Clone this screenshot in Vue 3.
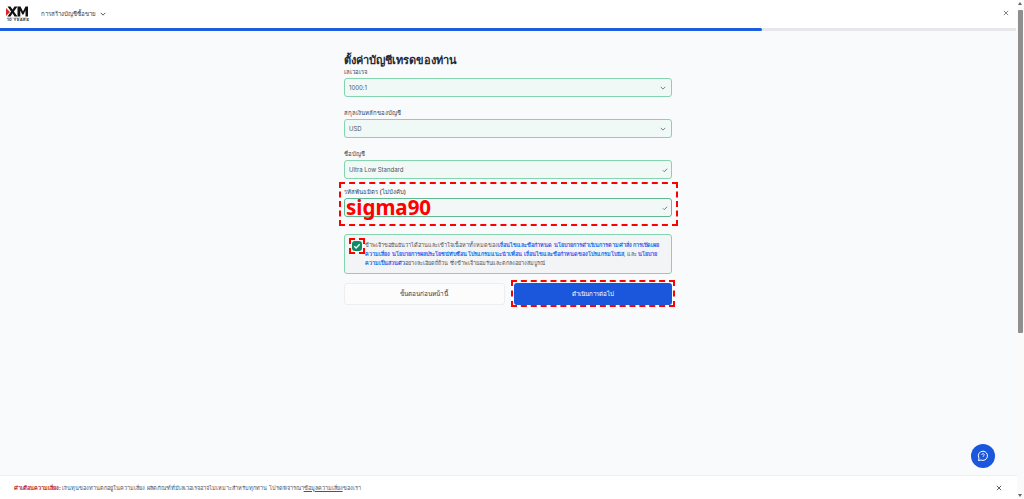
<script setup>
const rows = [
  { label: 'เลเวอเรจ', value: '1000:1', icon: 'down' },
  { label: 'สกุลเงินหลักของบัญชี', value: 'USD', icon: 'down' },
  { label: 'ชื่อบัญชี', value: 'Ultra Low Standard', icon: 'check' },
]
</script>

<template>
  <div class="page">
    <div class="main">
      <header class="top">
        <svg class="logo" width="22" height="20" viewBox="0 0 22 20">
          <path d="M0 3 L4 7 L0 11 Z" fill="#d8232a" />
          <path d="M1.5 1.5h3l2 3 2-3h3l-3.6 5 3.6 5h-3l-2-3.2-2 3.2h-3l3.6-5z" fill="#111" />
          <path d="M11.5 11.5v-10h3l2.5 5 2.5-5h2.5v10h-2.5v-6l-2 4h-1.2l-2-4v6z" fill="#111" />
          <rect x="1" y="12.6" width="20" height="0.6" fill="#aaa" />
        </svg>
        <span class="years">10 YEARS</span>
        <span class="crumb">การสร้างบัญชีซื้อขาย</span>
        <svg class="chev" width="6" height="6" viewBox="0 0 8 8"><path d="M1 2.5l3 3 3-3" fill="none" stroke="#374151" stroke-width="1.2" /></svg>
        <svg class="close" width="6" height="6" viewBox="0 0 7 7"><path d="M1 1l5 5M6 1L1 6" stroke="#6b7280" stroke-width="1" /></svg>
      </header>
      <div class="track"><div class="fill"></div></div>

      <main class="content">
        <form class="form" @submit.prevent>
          <h1>ตั้งค่าบัญชีเทรดของท่าน</h1>
          <div v-for="row in rows" :key="row.label" class="field">
            <label>{{ row.label }}</label>
            <div class="box">
              <span>{{ row.value }}</span>
              <svg v-if="row.icon === 'down'" width="6" height="6" viewBox="0 0 8 8"><path d="M1 2.5l3 3 3-3" fill="none" stroke="#6b7280" stroke-width="1.2" /></svg>
              <svg v-else class="ok" width="6" height="6" viewBox="0 0 8 8"><path d="M1.2 4.4l1.9 1.9 3.7-4" fill="none" stroke="#4b7a68" stroke-width="1.2" /></svg>
            </div>
          </div>

          <div class="field promo">
            <label>รหัสพันธมิตร (ไม่บังคับ)</label>
            <div class="box dark">
              <span></span>
              <svg class="ok" width="6" height="6" viewBox="0 0 8 8"><path d="M1.2 4.4l1.9 1.9 3.7-4" fill="none" stroke="#6b7280" stroke-width="1.2" /></svg>
            </div>
            <span class="sigma">sigma90</span>
            <i class="dash promo-dash"></i>
          </div>

          <div class="agree">
            <span class="tick">
              <svg width="8" height="8" viewBox="0 0 8 8"><path d="M1.3 4.2l1.8 1.7 3.6-3.6" fill="none" stroke="#fff" stroke-width="1.4" /></svg>
              <i class="dash tick-dash"></i>
            </span>
            <p>ข้าพเจ้าขอยืนยันว่าได้อ่านและเข้าใจเนื้อหาทั้งหมดของ<a>เงื่อนไขและข้อกำหนด</a> <a>นโยบายการดำเนินการตามคำสั่ง</a> <a>การเปิดเผย</a><br><a>ความเสี่ยง</a> <a>นโยบายการผลประโยชน์ทับซ้อน</a> <a>โปรแกรมแนะนำเพื่อน</a> <a>เงื่อนไขและข้อกำหนดของโปรแกรมโบนัส</a>, และ <a>นโยบาย</a><br><a>ความเป็นส่วนตัว</a>อย่างละเอียดถี่ถ้วน ซึ่งข้าพเจ้ายอมรับและตกลงอย่างสมบูรณ์</p>
          </div>

          <div class="actions">
            <button type="button" class="back">ขั้นตอนก่อนหน้านี้</button>
            <button type="submit" class="next">ดำเนินการต่อไป<i class="dash next-dash"></i></button>
          </div>
        </form>
      </main>

      <button class="help" type="button" aria-label="help">
        <svg width="12" height="12" viewBox="0 0 12 12"><path d="M6 1.2a4.6 4.6 0 1 1-2 8.8L1.5 10.6 2 8.2A4.6 4.6 0 0 1 6 1.2z" fill="none" stroke="#fff" stroke-width="1" /><path d="M4.8 4.8a1.2 1.2 0 1 1 1.7 1.1c-.4.2-.5.4-.5.9M6 8.2v.1" fill="none" stroke="#fff" stroke-width=".9" /></svg>
      </button>

      <footer class="risk">
        <p><b>คำเตือนความเสี่ยง:</b> เงินทุนของท่านตกอยู่ในความเสี่ยง ผลิตภัณฑ์ที่มีเลเวอเรจอาจไม่เหมาะสำหรับทุกท่าน โปรดพิจารณา<u>ข้อมูลความเสี่ยง</u>ของเรา</p>
        <svg width="6" height="6" viewBox="0 0 7 7"><path d="M1 1l5 5M6 1L1 6" stroke="#4b5563" stroke-width="1.1" /></svg>
      </footer>
    </div>
    <aside class="scrollbar">
      <i class="up"></i>
      <i class="thumb"></i>
      <i class="down"></i>
    </aside>
  </div>
</template>

<style>
html, body { margin: 0; overflow: hidden; }
</style>

<style scoped>
.page { position: relative; display: flex; width: 1024px; height: 499px; overflow: hidden; background: #fff; font-family: Inter, "Noto Sans", "Liberation Sans", sans-serif; }
.main { position: relative; display: flex; flex-direction: column; flex: 1; min-width: 0; background: #f9fafb; }
.top { position: relative; display: flex; align-items: center; height: 28px; background: #fff; flex: none; }
.logo { position: absolute; left: 6px; top: 5px; }
.years { position: absolute; left: 7px; top: 17px; font-size: 4px; font-weight: 700; letter-spacing: .4px; color: #333; line-height: 5px; }
.crumb { margin-left: 41px; font-size: 6.2px; color: #374151; }
.chev { margin-left: 4px; }
.close { position: absolute; right: 8px; top: 10px; }
.track { height: 3px; background: #e5e7eb; margin-right: 1px; flex: none; }
.fill { width: 762px; height: 100%; background: #1d5ee0; border-radius: 0 2px 2px 0; }
.content { flex: 1; display: flex; justify-content: center; }
.form { width: 328px; margin-left: -1px; padding-top: 22px; display: flex; flex-direction: column; }
h1 { margin: 0; font-size: 11px; line-height: 14px; font-weight: 700; color: #1f2937; }
.field { position: relative; margin-bottom: 11px; display: flex; flex-direction: column; }
.field:nth-of-type(3) { margin-bottom: 8px; }
.field label { font-size: 6px; line-height: 10px; font-weight: 500; color: #374151; margin-bottom: 1px; }
.box { height: 19px; box-sizing: border-box; display: flex; align-items: center; justify-content: space-between; padding: 0 5px 0 4px; border: 1px solid #84d4b0; border-radius: 3px; background: #f1f9f6; font-size: 6px; color: #4b5563; }
.box .ok { margin-right: -2px; }
.box.dark { border-color: #5fb994; background: #f2f8f5; }
.promo { margin-bottom: 17px; }
.sigma { position: absolute; left: 2px; top: 9px; font-family: "Noto Sans", sans-serif; font-size: 20.5px; line-height: 22px; font-weight: 700; color: #f00; }
.dash { position: absolute; border: 2px dashed #f00; box-sizing: border-box; pointer-events: none; }
.promo-dash { left: -5px; right: -6px; top: -5px; bottom: -9px; }
.agree { display: flex; box-sizing: border-box; height: 40px; padding: 6px 7px; gap: 3px; border: 1px solid #84d4b0; border-radius: 3px; background: #f3f4f6; }
.agree p { margin: 0; font-size: 5.5px; line-height: 9px; white-space: nowrap; color: #4b5563; }
.agree a { color: #2563eb; font-weight: 600; }
.tick { position: relative; flex: none; width: 10px; height: 10px; display: grid; place-items: center; background: #0f8a63; border-radius: 3px; }
.tick-dash { left: -3px; right: -3px; top: -3px; bottom: -3px; }
.actions { display: flex; gap: 9px; margin-top: 9px; }
.actions button { flex: 1; height: 22px; border-radius: 3px; font: inherit; font-weight: 500; padding: 0; position: relative; }
.back { background: #fcfcfd; border: 1px solid #eceef1; color: #374151; font-size: 6.4px !important; }
.next { background: #1b57dc; border: 0; color: #fff; font-size: 6.2px !important; }
.next-dash { left: -3px; right: -3px; top: -3px; bottom: -2px; }
.help { position: absolute; left: 971px; top: 444px; width: 24px; height: 24px; border: 0; border-radius: 50%; background: #1b57dc; display: grid; place-items: center; padding: 0; }
.risk { display: flex; align-items: center; justify-content: space-between; box-sizing: border-box; height: 24px; padding: 0 15px 0 14px; background: #fff; border-top: 1px solid #eef0f3; flex: none; }
.risk p { margin: 0; font-size: 5.6px; color: #4b5563; }
.risk b { color: #b91c1c; font-weight: 700; }
.scrollbar { position: relative; flex: none; width: 7px; background: #fafafa; }
.scrollbar i { position: absolute; }
.up { left: 1px; top: 2px; border: 2.5px solid transparent; border-top: 0; border-bottom: 3px solid #666; }
.down { left: 1px; bottom: 2px; border: 2.5px solid transparent; border-bottom: 0; border-top: 3px solid #666; }
.thumb { left: 1px; top: 10px; width: 5px; height: 323px; background: #8f8f8f; border-radius: 1px; }
</style>
